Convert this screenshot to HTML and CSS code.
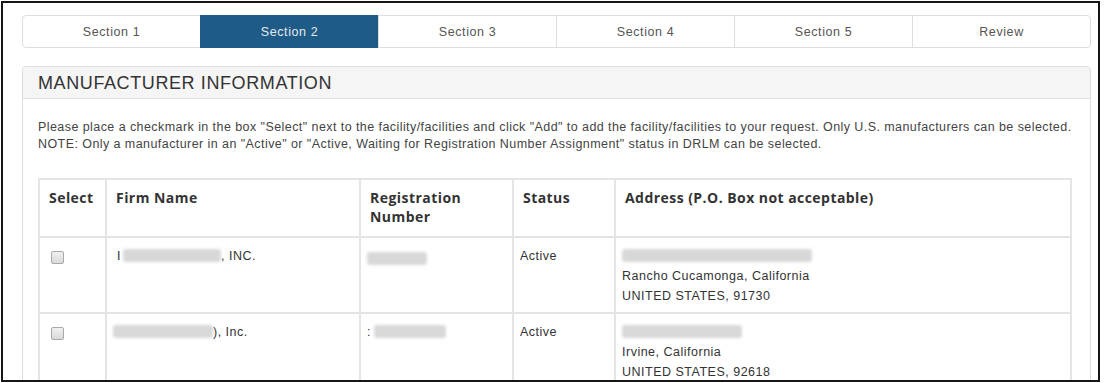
FILE: index.html
```html
<!DOCTYPE html>
<html lang="en">
<head>
  <meta charset="UTF-8">
  <meta name="viewport" content="width=device-width, initial-scale=1">
  <title>Manufacturer Information</title>
  <link rel="stylesheet" href="styles.css">
</head>
<body>
  <div class="frame">
    <div class="container">
      <div class="tabs">
        <div class="tab">Section 1</div>
        <div class="tab active">Section 2</div>
        <div class="tab">Section 3</div>
        <div class="tab">Section 4</div>
        <div class="tab">Section 5</div>
        <div class="tab">Review</div>
      </div>

      <div class="panel">
        <div class="panel-heading">MANUFACTURER INFORMATION</div>
        <div class="panel-body">
          <p class="note">Please place a checkmark in the box "Select" next to the facility/facilities and click "Add" to add the facility/facilities to your request. Only U.S. manufacturers can be selected.<br>NOTE: Only a manufacturer in an "Active" or "Active, Waiting for Registration Number Assignment" status in DRLM can be selected.</p>

          <table class="firms">
            <thead>
              <tr>
                <th class="col-select">Select</th>
                <th class="col-name">Firm Name</th>
                <th class="col-reg">Registration Number</th>
                <th class="col-status">Status</th>
                <th>Address (P.O. Box not acceptable)</th>
              </tr>
            </thead>
            <tbody>
              <tr>
                <td><input type="checkbox" class="check"></td>
                <td class="firm">I<span class="redact w98"></span>, INC.</td>
                <td><span class="redact w60"></span></td>
                <td>Active</td>
                <td><span class="redact w190"></span><br>Rancho Cucamonga, California<br>UNITED STATES, 91730</td>
              </tr>
              <tr>
                <td><input type="checkbox" class="check"></td>
                <td class="firm"><span class="redact w100 lead"></span>), Inc.</td>
                <td>:<span class="redact w72"></span></td>
                <td>Active</td>
                <td><span class="redact w120"></span><br>Irvine, California<br>UNITED STATES, 92618</td>
              </tr>
            </tbody>
          </table>
        </div>
      </div>
    </div>
  </div>
</body>
</html>
```

FILE: styles.css
```css
body {
  margin: 0;
  background: #fff;
  font-family: "Liberation Sans", Arial, sans-serif;
  color: #333;
}

.frame {
  margin: 1px 0 0 1px;
  width: 1099px;
  height: 381px;
  border: 2px solid #161616;
  box-sizing: border-box;
  overflow: hidden;
  padding: 12px 0 0 19px;
}

.container {
  width: 1069px;
}

.tabs {
  display: flex;
  height: 33px;
  border: 1px solid #dedede;
  border-radius: 4px;
  box-sizing: border-box;
}

.tab {
  flex: 1;
  display: flex;
  align-items: center;
  justify-content: center;
  font-size: 12.5px;
  letter-spacing: 0.6px;
  color: #555;
  border-left: 1px solid #dedede;
}

.tab:first-child {
  border-left: none;
}

.tab.active {
  background: #1f5b87;
  color: #e4e9ee;
  margin: -1px 0;
  border-left-color: #1f5b87;
}

.panel {
  margin-top: 18px;
  border: 1px solid #dedede;
  border-radius: 4px;
  height: 400px;
}

.panel-heading {
  height: 31px;
  background: #f5f5f5;
  border-bottom: 1px solid #e3e3e3;
  padding-left: 15px;
  font-size: 18px;
  letter-spacing: 0.6px;
  line-height: 32px;
  color: #333;
  border-radius: 4px 4px 0 0;
}

.panel-body {
  padding: 20px 0 0 15px;
}

.note {
  margin: 0 0 25px;
  font-size: 12.5px;
  letter-spacing: 0.43px;
  line-height: 17px;
  color: #444;
  white-space: nowrap;
}

.firms {
  width: 1034px;
  border-collapse: collapse;
  border: 2px solid #e4e4e4;
  table-layout: fixed;
}

.firms th,
.firms td {
  border: 2px solid #e4e4e4;
  text-align: left;
  vertical-align: top;
}

.firms th {
  font-family: "Open Sans", "DejaVu Sans", sans-serif;
  font-weight: 700;
  font-size: 14px;
  letter-spacing: 0.45px;
  line-height: 19px;
  color: #333;
  padding: 8px 6px 10px 9px;
  height: 38px;
}

.firms td {
  font-size: 12.5px;
  letter-spacing: 0.5px;
  line-height: 20px;
  color: #333;
  padding: 8px 6px 6px 6px;
  height: 60px;
}

.firms td.firm {
  padding-left: 10px;
}

.col-select { width: 50px; }
.col-name { width: 237px; }
.col-reg { width: 136px; }
.col-status { width: 85px; }

.check {
  appearance: none;
  -webkit-appearance: none;
  width: 13px;
  height: 13px;
  margin: 5px 0 0 5px;
  border: 1px solid #a9a9a9;
  border-radius: 2px;
  background: linear-gradient(#f0f0f0, #d9d9d9);
  box-sizing: border-box;
  display: block;
}

.redact {
  display: inline-block;
  height: 13px;
  vertical-align: -2px;
  background: #d8d8d8;
  border-radius: 3px;
  filter: blur(1.5px);
}

.redact.lead { margin-left: -4px; }
.w60 { width: 60px; margin-top: 6px; }
.w72 { width: 72px; margin-left: 3px; }
.w98 { width: 98px; margin-left: 2px; }
.w100 { width: 100px; }
.w120 { width: 120px; }
.w190 { width: 190px; }
```
